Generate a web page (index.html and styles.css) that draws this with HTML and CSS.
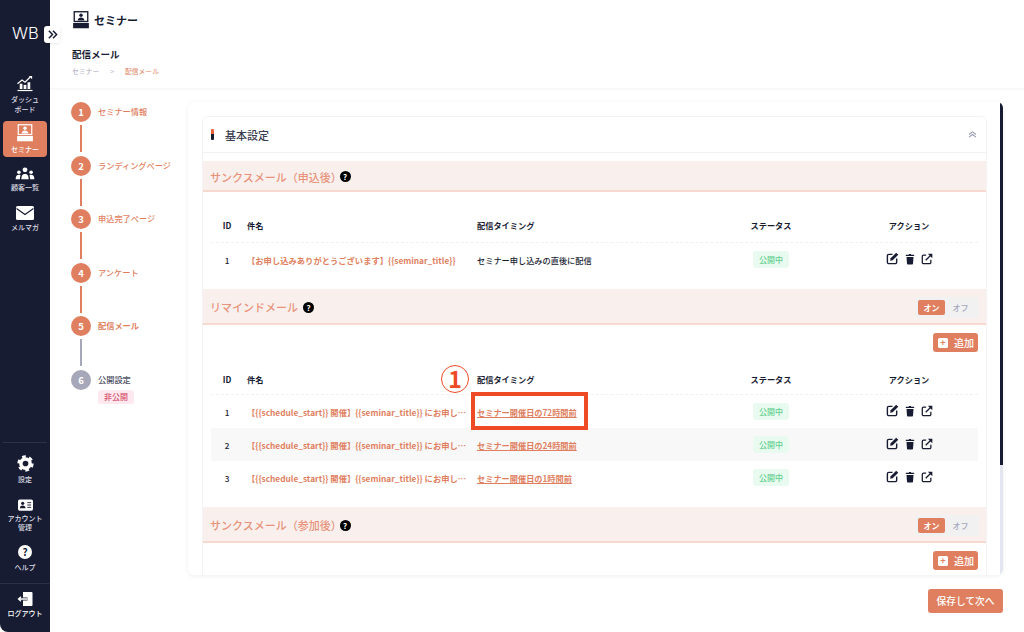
FILE: index.html
```html
<!DOCTYPE html>
<html>
<head>
    <meta charset="utf-8">
    <link rel="stylesheet" href="styles.css">
</head>
<body>
    <div class="app">
        <aside class="sidebar">
            <div class="logo">WB</div>
            <div class="toggle-btn">
                <svg viewBox="0 0 12 12" width="11" height="11"><path d="M2 2l4 4-4 4M6.5 2l4 4-4 4" fill="none" stroke="#181c32" stroke-width="1.6"/></svg>
            </div>
            <nav class="nav-top">
                <div class="nav-item">
                    <svg class="nav-icon" viewBox="0 0 24 24" width="18" height="18"><path d="M2 13l6-5 4 3 7-7" fill="none" stroke="#fff" stroke-width="1.6"/><path d="M17 2.5h4.5V7z" fill="#fff"/><rect x="5" y="13" width="3.6" height="7" fill="#fff"/><rect x="10.2" y="14.5" width="3.6" height="5.5" fill="#fff"/><rect x="15.4" y="11" width="3.6" height="9" fill="#fff"/><rect x="2" y="21.2" width="20" height="1.6" fill="#fff"/></svg>
                    <span>ダッシュ<br>ボード</span>
                </div>
                <div class="nav-item active">
                    <svg class="nav-icon" viewBox="0 0 24 24" width="18" height="18"><rect x="3" y="1" width="18" height="13" fill="none" stroke="#fff" stroke-width="1.6"/><circle cx="12" cy="5.6" r="2.3" fill="#fff"/><path d="M7.5 12.5c.4-3 2.4-4 4.5-4s4.1 1 4.5 4z" fill="#fff"/><rect x="1.5" y="16" width="21" height="7" fill="#fff"/></svg>
                    <span>セミナー</span>
                </div>
                <div class="nav-item">
                    <svg class="nav-icon" viewBox="0 0 24 16" width="20" height="13"><circle cx="12" cy="3.5" r="3" fill="#fff"/><path d="M7.5 15c0-5 2-6.500 4.500-6.500s4.500 1.500 4.500 6.500z" fill="#fff"/><circle cx="4.500" cy="6.500" r="2.200" fill="#fff"/><path d="M.5 15c0-4 1.500-5.500 4-5.500 1 0 1.500.2 2 .5-.5 1.500-.8 3-.8 5z" fill="#fff"/><circle cx="19.500" cy="6.500" r="2.200" fill="#fff"/><path d="M23.500 15c0-4-1.500-5.500-4-5.500-1 0-1.500.2-2 .5.500 1.500.8 3 .8 5z" fill="#fff"/></svg>
                    <span>顧客一覧</span>
                </div>
                <div class="nav-item">
                    <svg class="nav-icon" viewBox="0 0 18 14" width="18" height="14"><rect width="18" height="14" rx="1.500" fill="#fff"/><path d="M.5 2.500L9 8.500l8.500-6" fill="none" stroke="#181c32" stroke-width="1.200"/></svg>
                    <span>メルマガ</span>
                </div>
            </nav>
            <nav class="nav-bottom">
                <div class="nav-item">
                    <svg class="nav-icon" viewBox="0 0 24 24" width="17" height="17"><circle cx="12" cy="12" r="6.500" fill="none" stroke="#fff" stroke-width="5"/><circle cx="12" cy="12" r="9.800" fill="none" stroke="#fff" stroke-width="3.400" stroke-dasharray="5.200 5.060"/></svg>
                    <span>設定</span>
                </div>
                <div class="nav-item">
                    <svg class="nav-icon" viewBox="0 0 16 12" width="15" height="12"><rect width="16" height="12" rx="1.800" fill="#fff"/><circle cx="5" cy="4.200" r="1.700" fill="#181c32"/><path d="M2 9.500c0-2 1.200-3 3-3s3 1 3 3z" fill="#181c32"/><path d="M10 3.500h4M10 6h4M10 8.500h4" stroke="#181c32" stroke-width="1"/></svg>
                    <span>アカウント<br>管理</span>
                </div>
                <div class="nav-item">
                    <span class="help-icon">?</span>
                    <span>ヘルプ</span>
                </div>
            </nav>
            <div class="nav-logout">
                <div class="nav-item">
                    <svg class="nav-icon" viewBox="0 0 16 14" width="16" height="14"><path d="M6 0h8.500a1 1 0 0 1 1 1v12a1 1 0 0 1-1 1H6z" fill="#fff"/><path d="M10.500 7H1.500M4 4.800L1.500 7 4 9.200" fill="none" stroke="#181c32" stroke-width="3"/><path d="M10.500 7H1.500M4 4.800L1.500 7 4 9.200" fill="none" stroke="#fff" stroke-width="1.300"/></svg>
                    <span>ログアウト</span>
                </div>
            </div>
        </aside>

        <div class="content">
            <header class="page-header">
                <div class="page-title">
                    <svg viewBox="0 0 24 24" width="18" height="18"><rect x="3" y="1" width="18" height="13" fill="none" stroke="#181c32" stroke-width="1.800"/><circle cx="12" cy="5.600" r="2.300" fill="#181c32"/><path d="M7.500 12.500c.4-3 2.400-4 4.500-4s4.100 1 4.500 4z" fill="#181c32"/><rect x="1.500" y="16" width="21" height="7" fill="#181c32"/></svg>
                    <span>セミナー</span>
                </div>
                <h1 class="page-sub">配信メール</h1>
                <div class="breadcrumb">
                    <span>セミナー</span>
                    <span class="crumb-sep">&gt;</span>
                    <span class="crumb-current">配信メール</span>
                </div>
            </header>

            <div class="page-body">
                <ol class="steps">
                    <li class="step"><span class="step-num">1</span><span class="step-label">セミナー情報</span></li>
                    <li class="step"><span class="step-num">2</span><span class="step-label">ランディングページ</span></li>
                    <li class="step"><span class="step-num">3</span><span class="step-label">申込完了ページ</span></li>
                    <li class="step"><span class="step-num">4</span><span class="step-label">アンケート</span></li>
                    <li class="step step-current"><span class="step-num">5</span><span class="step-label">配信メール</span></li>
                    <li class="step step-off">
                        <span class="step-num">6</span>
                        <div class="step-text">
                            <span class="step-label">公開設定</span>
                            <span class="step-badge">非公開</span>
                        </div>
                    </li>
                </ol>

                <div class="main-col">
                    <div class="outer-card">
                        <div class="scroll-track"><div class="scroll-thumb"></div></div>
                        <div class="inner-card">
                            <div class="card-head">
                                <span class="head-mark"></span>
                                <span class="head-title">基本設定</span>
                                <svg class="head-chevron" viewBox="0 0 10 8" width="9" height="7"><path d="M1 4l4-3 4 3M1 7l4-3 4 3" fill="none" stroke="#9a9cae" stroke-width="1.200"/></svg>
                            </div>

                            <section class="mail-section first">
                                <div class="band">
                                    <span class="band-title paren">サンクスメール（申込後）</span>
                                    <span class="q-badge">?</span>
                                </div>
                                <div class="tbl tbl-top">
                                    <div class="tr th">
                                        <div class="c-id">ID</div><div class="c-name">件名</div><div class="c-time">配信タイミング</div><div class="c-status">ステータス</div><div class="c-action">アクション</div>
                                    </div>
                                    <div class="tr">
                                        <div class="c-id">1</div>
                                        <div class="c-name"><a class="subject">【お申し込みありがとうございます】{{seminar_title}}</a></div>
                                        <div class="c-time">セミナー申し込みの直後に配信</div>
                                        <div class="c-status"><span class="status">公開中</span></div>
                                        <div class="c-action">
                                            <svg viewBox="0 0 14 14" width="13" height="13"><path d="M7 2.500H3A1.500 1.500 0 0 0 1.500 4v7A1.500 1.500 0 0 0 3 12.500h7A1.500 1.500 0 0 0 11.500 11V7" fill="none" stroke="#181c32" stroke-width="1.500"/><path d="M11 .8l2.200 2.200-6 6-2.700.5.500-2.700z" fill="#181c32"/></svg>
                                            <svg viewBox="0 0 12 14" width="10" height="12"><path d="M1 2h3.500l.5-1h2l.5 1H11v1.500H1z" fill="#181c32"/><path d="M1.800 4.500h8.400l-.6 8.300a1 1 0 0 1-1 .9H3.400a1 1 0 0 1-1-.9z" fill="#181c32"/></svg>
                                            <svg viewBox="0 0 14 14" width="12" height="12"><path d="M6 2.500H3A1.500 1.500 0 0 0 1.500 4v7A1.500 1.500 0 0 0 3 12.500h7A1.500 1.500 0 0 0 11.500 11V8" fill="none" stroke="#181c32" stroke-width="1.500"/><path d="M5.500 8.500L12 2" stroke="#181c32" stroke-width="1.500"/><path d="M8 .8h5.200V6z" fill="#181c32"/></svg>
                                        </div>
                                    </div>
                                </div>
                            </section>

                            <section class="mail-section">
                                <div class="band">
                                    <span class="band-title">リマインドメール</span>
                                    <span class="q-badge">?</span>
                                    <div class="switch"><span class="switch-on">オン</span><span class="switch-off">オフ</span></div>
                                </div>
                                <div class="add-row">
                                    <button class="add-btn"><span class="plus-box">+</span>追加</button>
                                </div>
                                <div class="tbl">
                                    <div class="tr th">
                                        <div class="c-id">ID</div><div class="c-name">件名</div><div class="c-time">配信タイミング</div><div class="c-status">ステータス</div><div class="c-action">アクション</div>
                                    </div>
                                    <div class="tr">
                                        <div class="c-id">1</div>
                                        <div class="c-name"><a class="subject">【{{schedule_start}} 開催】{{seminar_title}} にお申し…</a></div>
                                        <div class="c-time">
                                            <a class="timing-link">セミナー開催日の72時間前</a>
                                            <span class="mark-number">1</span>
                                            <span class="mark-box"></span>
                                        </div>
                                        <div class="c-status"><span class="status">公開中</span></div>
                                        <div class="c-action">
                                            <svg viewBox="0 0 14 14" width="13" height="13"><path d="M7 2.500H3A1.500 1.500 0 0 0 1.500 4v7A1.500 1.500 0 0 0 3 12.500h7A1.500 1.500 0 0 0 11.500 11V7" fill="none" stroke="#181c32" stroke-width="1.500"/><path d="M11 .8l2.200 2.200-6 6-2.700.5.500-2.700z" fill="#181c32"/></svg>
                                            <svg viewBox="0 0 12 14" width="10" height="12"><path d="M1 2h3.500l.5-1h2l.5 1H11v1.500H1z" fill="#181c32"/><path d="M1.800 4.500h8.400l-.6 8.300a1 1 0 0 1-1 .9H3.400a1 1 0 0 1-1-.9z" fill="#181c32"/></svg>
                                            <svg viewBox="0 0 14 14" width="12" height="12"><path d="M6 2.500H3A1.500 1.500 0 0 0 1.500 4v7A1.500 1.500 0 0 0 3 12.500h7A1.500 1.500 0 0 0 11.500 11V8" fill="none" stroke="#181c32" stroke-width="1.500"/><path d="M5.500 8.500L12 2" stroke="#181c32" stroke-width="1.500"/><path d="M8 .8h5.200V6z" fill="#181c32"/></svg>
                                        </div>
                                    </div>
                                    <div class="tr striped">
                                        <div class="c-id">2</div>
                                        <div class="c-name"><a class="subject">【{{schedule_start}} 開催】{{seminar_title}} にお申し…</a></div>
                                        <div class="c-time"><a class="timing-link">セミナー開催日の24時間前</a></div>
                                        <div class="c-status"><span class="status">公開中</span></div>
                                        <div class="c-action">
                                            <svg viewBox="0 0 14 14" width="13" height="13"><path d="M7 2.500H3A1.500 1.500 0 0 0 1.500 4v7A1.500 1.500 0 0 0 3 12.500h7A1.500 1.500 0 0 0 11.500 11V7" fill="none" stroke="#181c32" stroke-width="1.500"/><path d="M11 .8l2.200 2.200-6 6-2.700.5.500-2.700z" fill="#181c32"/></svg>
                                            <svg viewBox="0 0 12 14" width="10" height="12"><path d="M1 2h3.500l.5-1h2l.5 1H11v1.500H1z" fill="#181c32"/><path d="M1.800 4.500h8.400l-.6 8.300a1 1 0 0 1-1 .9H3.400a1 1 0 0 1-1-.9z" fill="#181c32"/></svg>
                                            <svg viewBox="0 0 14 14" width="12" height="12"><path d="M6 2.500H3A1.500 1.500 0 0 0 1.500 4v7A1.500 1.500 0 0 0 3 12.500h7A1.500 1.500 0 0 0 11.500 11V8" fill="none" stroke="#181c32" stroke-width="1.500"/><path d="M5.500 8.500L12 2" stroke="#181c32" stroke-width="1.500"/><path d="M8 .8h5.200V6z" fill="#181c32"/></svg>
                                        </div>
                                    </div>
                                    <div class="tr">
                                        <div class="c-id">3</div>
                                        <div class="c-name"><a class="subject">【{{schedule_start}} 開催】{{seminar_title}} にお申し…</a></div>
                                        <div class="c-time"><a class="timing-link">セミナー開催日の1時間前</a></div>
                                        <div class="c-status"><span class="status">公開中</span></div>
                                        <div class="c-action">
                                            <svg viewBox="0 0 14 14" width="13" height="13"><path d="M7 2.500H3A1.500 1.500 0 0 0 1.500 4v7A1.500 1.500 0 0 0 3 12.500h7A1.500 1.500 0 0 0 11.500 11V7" fill="none" stroke="#181c32" stroke-width="1.500"/><path d="M11 .8l2.200 2.200-6 6-2.700.5.500-2.700z" fill="#181c32"/></svg>
                                            <svg viewBox="0 0 12 14" width="10" height="12"><path d="M1 2h3.500l.5-1h2l.5 1H11v1.500H1z" fill="#181c32"/><path d="M1.800 4.500h8.400l-.6 8.300a1 1 0 0 1-1 .9H3.400a1 1 0 0 1-1-.9z" fill="#181c32"/></svg>
                                            <svg viewBox="0 0 14 14" width="12" height="12"><path d="M6 2.500H3A1.500 1.500 0 0 0 1.500 4v7A1.500 1.500 0 0 0 3 12.500h7A1.500 1.500 0 0 0 11.500 11V8" fill="none" stroke="#181c32" stroke-width="1.500"/><path d="M5.500 8.500L12 2" stroke="#181c32" stroke-width="1.500"/><path d="M8 .8h5.200V6z" fill="#181c32"/></svg>
                                        </div>
                                    </div>
                                </div>
                            </section>

                            <section class="mail-section">
                                <div class="band">
                                    <span class="band-title paren">サンクスメール（参加後）</span>
                                    <span class="q-badge">?</span>
                                    <div class="switch"><span class="switch-on">オン</span><span class="switch-off">オフ</span></div>
                                </div>
                                <div class="add-row">
                                    <button class="add-btn"><span class="plus-box">+</span>追加</button>
                                </div>
                            </section>
                        </div>
                    </div>
                    <div class="footer-row">
                        <button class="save-btn">保存して次へ</button>
                    </div>
                </div>
            </div>
        </div>
    </div>
</body>
</html>
```

FILE: styles.css
```css
* {
    box-sizing: border-box;
}

html, body {
    margin: 0;
    height: 632px;
    overflow: hidden;
    background: #fff;
    font-family: "Noto Sans CJK JP", "Noto Sans", sans-serif;
    color: #181c32;
}

.app {
    display: flex;
    height: 632px;
}

/* sidebar */
.sidebar {
    position: relative;
    width: 50px;
    flex-shrink: 0;
    display: flex;
    flex-direction: column;
    background: #181c32;
    border-bottom-left-radius: 8px;
    color: #fff;
}

.logo {
    height: 66px;
    padding: 23px 0 0 12px;
    font-family: "Inter", sans-serif;
    font-size: 16.5px;
    line-height: 20px;
    font-weight: 300;
}

.toggle-btn {
    position: absolute;
    top: 26px;
    left: 44px;
    width: 16px;
    height: 17px;
    display: flex;
    align-items: center;
    justify-content: center;
    background: #fff;
    border-radius: 3px;
    box-shadow: 0 1px 3px rgba(0, 0, 0, 0.1);
}

.nav-item {
    display: flex;
    flex-direction: column;
    align-items: center;
    margin: 0 3px;
    color: #dcdde4;
    font-size: 7px;
    line-height: 9.5px;
    font-weight: 500;
    text-align: center;
    white-space: nowrap;
}

.nav-icon {
    display: block;
    flex-shrink: 0;
    margin-bottom: 3px;
}

.nav-top {
    display: flex;
    flex-direction: column;
}

.nav-top .nav-item:nth-child(1) {
    height: 55px;
    padding-top: 8px;
}

.nav-top .nav-item:nth-child(2) {
    height: 36px;
    padding-top: 3px;
    background: #e07f5f;
    border-radius: 4px;
    color: #fff;
}

.nav-top .nav-item:nth-child(3) {
    height: 38px;
    padding-top: 10px;
}

.nav-top .nav-item:nth-child(4) {
    height: 40px;
    padding-top: 11px;
}

.nav-bottom {
    margin: auto 3px 0;
    padding-top: 12px;
    border-top: 1px solid #2c3148;
}

.nav-bottom .nav-item {
    margin: 0;
}

.nav-bottom .nav-item:nth-child(2) {
    margin-top: 14px;
}

.nav-bottom .nav-item:nth-child(3) {
    margin-top: 12.5px;
}

.help-icon {
    width: 14px;
    height: 14px;
    margin-bottom: 4px;
    border-radius: 50%;
    background: #fff;
    color: #181c32;
    font-size: 10px;
    line-height: 14px;
    font-weight: 700;
}

.nav-logout {
    height: 49px;
    margin-top: 10.5px;
    padding-top: 8px;
    border-top: 1px solid #2c3148;
}

.nav-logout .nav-item {
    color: #fff;
}

/* header */
.content {
    flex: 1;
    min-width: 0;
    display: flex;
    flex-direction: column;
}

.page-header {
    height: 90px;
    padding: 10px 0 0 22px;
    border-bottom: 2px solid #f9f9fb;
}

.page-title {
    display: flex;
    align-items: center;
    gap: 4px;
    height: 20px;
    font-size: 11px;
    font-weight: 700;
}

.page-sub {
    margin: 15px 0 0;
    font-size: 9.5px;
    line-height: 18px;
    font-weight: 700;
}

.breadcrumb {
    display: flex;
    gap: 10px;
    margin-top: 2px;
    font-size: 6.8px;
    line-height: 12px;
    color: #a6a8ba;
}

.crumb-sep {
    margin: 0 1px;
}

.crumb-current {
    color: #e07f5f;
}

.page-body {
    flex: 1;
    display: flex;
    min-height: 0;
    padding: 12px 21px 0 21px;
}

/* steps */
.steps {
    width: 117px;
    flex-shrink: 0;
    margin: 0;
    padding: 0;
    list-style: none;
}

.step {
    position: relative;
    display: flex;
    align-items: flex-start;
    gap: 7px;
    height: 53.5px;
}

.step::after {
    content: "";
    position: absolute;
    left: 9px;
    top: 23px;
    width: 2px;
    height: 27px;
    background: #e07f5f;
}

.step:nth-child(5)::after {
    background: #a6a8ba;
}

.step:last-child::after {
    display: none;
}

.step-num {
    width: 20px;
    height: 20px;
    flex-shrink: 0;
    border-radius: 50%;
    background: #e07f5f;
    color: #fff;
    font-size: 9.5px;
    line-height: 20px;
    font-weight: 700;
    text-align: center;
}

.step-label {
    font-size: 8.2px;
    line-height: 18px;
    color: #e07f5f;
    font-weight: 500;
    white-space: nowrap;
}

.step-current .step-label {
    font-weight: 700;
}

.step-off .step-num {
    background: #a6a8ba;
}

.step-off .step-label {
    color: #4b4f63;
}

.step-text {
    display: flex;
    flex-direction: column;
    align-items: flex-start;
}

.step-badge {
    padding: 0 6px;
    margin-top: 2px;
    border-radius: 3px;
    background: #fde9ef;
    color: #d8506d;
    font-size: 8px;
    line-height: 14px;
    font-weight: 500;
}

/* main card */
.main-col {
    flex: 1;
    min-width: 0;
    display: flex;
    flex-direction: column;
}

.outer-card {
    position: relative;
    height: 473px;
    padding: 14px 16px 0 14px;
    overflow: hidden;
    border-radius: 6px;
    box-shadow: 0 1px 4px rgba(24, 28, 50, 0.07);
}

.scroll-track {
    position: absolute;
    top: 0;
    right: 0;
    width: 3px;
    height: 100%;
    background: #e4e6ef;
}

.scroll-thumb {
    height: 363px;
    background: #181c32;
}

.inner-card {
    padding-bottom: 40px;
    border: 1px solid #f3f3f6;
    border-radius: 6px;
}

.card-head {
    display: flex;
    align-items: center;
    height: 36px;
    padding: 0 9px 0 8px;
    border-bottom: 1px solid #f1f1f4;
}

.head-mark {
    width: 2.5px;
    height: 11px;
    margin-right: 11.5px;
    border-radius: 1px;
    background: linear-gradient(#e8603c 0 50%, #181c32 50%);
}

.head-title {
    flex: 1;
    font-size: 11px;
    font-weight: 500;
    color: #3a3d50;
}

.mail-section.first {
    margin-top: 8px;
}

.band {
    display: flex;
    align-items: center;
    gap: 5px;
    height: 36px;
    padding: 2px 7px 0;
    background: #f9f0ee;
    border-bottom: 2px solid #f8d9cf;
}

.first .band {
    height: 31px;
}

.band-title {
    font-size: 11px;
    color: #e8937a;
    font-weight: 500;
    white-space: nowrap;
}

.band-title.paren {
    margin-right: -7px;
}

.q-badge {
    width: 11px;
    height: 11px;
    border-radius: 50%;
    background: #000;
    color: #fff;
    font-size: 8px;
    line-height: 11px;
    font-weight: 700;
    text-align: center;
}

.switch {
    display: flex;
    align-items: center;
    margin-left: auto;
    width: 64px;
    height: 21px;
    padding: 0 3px;
    border-radius: 3px;
    background: #f1f1f2;
    font-size: 8px;
    font-weight: 700;
}

.switch-on {
    width: 27px;
    line-height: 15px;
    border-radius: 2px;
    background: #e07f5f;
    color: #fff;
    text-align: center;
}

.switch-off {
    flex: 1;
    color: #a6a8ba;
    text-align: center;
    font-weight: 500;
}

.add-row {
    display: flex;
    justify-content: flex-end;
    padding: 8px 8px 0 0;
}

.add-btn {
    display: flex;
    align-items: center;
    gap: 6px;
    width: 45px;
    height: 19px;
    padding: 0 0 0 5px;
    border: none;
    border-radius: 3px;
    background: #e07f5f;
    color: #fff;
    font-family: inherit;
    font-size: 10px;
    font-weight: 500;
}

.plus-box {
    width: 10px;
    height: 10px;
    border-radius: 1.5px;
    background: #fff;
    color: #e07f5f;
    font-size: 9px;
    line-height: 10px;
    font-weight: 700;
}

/* tables */
.tbl {
    margin: 0 8px 13px;
    font-size: 8.2px;
    font-weight: 500;
}

.tbl-top {
    padding-top: 20px;
}

.tr {
    display: flex;
    align-items: center;
    height: 33px;
}

.th {
    height: 31px;
    padding-bottom: 4px;
    font-weight: 700;
    border-bottom: 1px dashed #f1f1f4;
}

.add-row + .tbl .th {
    height: 33px;
    margin-top: 10px;
    padding-top: 2px;
    padding-bottom: 0;
}

.striped {
    background: #f8f8f8;
}

.c-id {
    width: 32px;
    text-align: center;
}

.c-name {
    width: 230px;
    padding-left: 4px;
}

.c-time {
    position: relative;
    width: 227px;
    padding-left: 4px;
}

.c-status {
    width: 142px;
    text-align: center;
}

.c-action {
    width: 134px;
    display: flex;
    justify-content: center;
    align-items: center;
    gap: 6px;
}

.c-action svg {
    margin-bottom: 2px;
}

.th .c-action {
    display: block;
    text-align: center;
}

.subject {
    color: #e07f5f;
    font-size: 8.3px;
    font-weight: 700;
    white-space: nowrap;
}

.timing-link {
    color: #e07f5f;
    font-weight: 700;
    text-decoration: underline;
}

.status {
    display: inline-block;
    padding: 0 6px;
    border-radius: 3px;
    background: #e9fbf0;
    color: #63cf8f;
    font-size: 8px;
    line-height: 17px;
}

/* red annotation */
.mark-number {
    position: absolute;
    left: -32px;
    top: -41px;
    width: 28px;
    height: 28px;
    border: 1.5px solid #ef4a26;
    border-radius: 50%;
    color: #ef4a26;
    font-size: 23px;
    line-height: 25px;
    font-weight: 700;
    text-align: center;
}

.mark-box {
    position: absolute;
    left: -2px;
    top: -14px;
    width: 117px;
    height: 38px;
    border: 4px solid #ef4a26;
}

.footer-row {
    display: flex;
    justify-content: flex-end;
    padding-top: 14px;
}

.save-btn {
    width: 75px;
    height: 24px;
    border: none;
    border-radius: 3px;
    background: #e07f5f;
    color: #fff;
    font-family: inherit;
    font-size: 9.7px;
    font-weight: 500;
}
```
